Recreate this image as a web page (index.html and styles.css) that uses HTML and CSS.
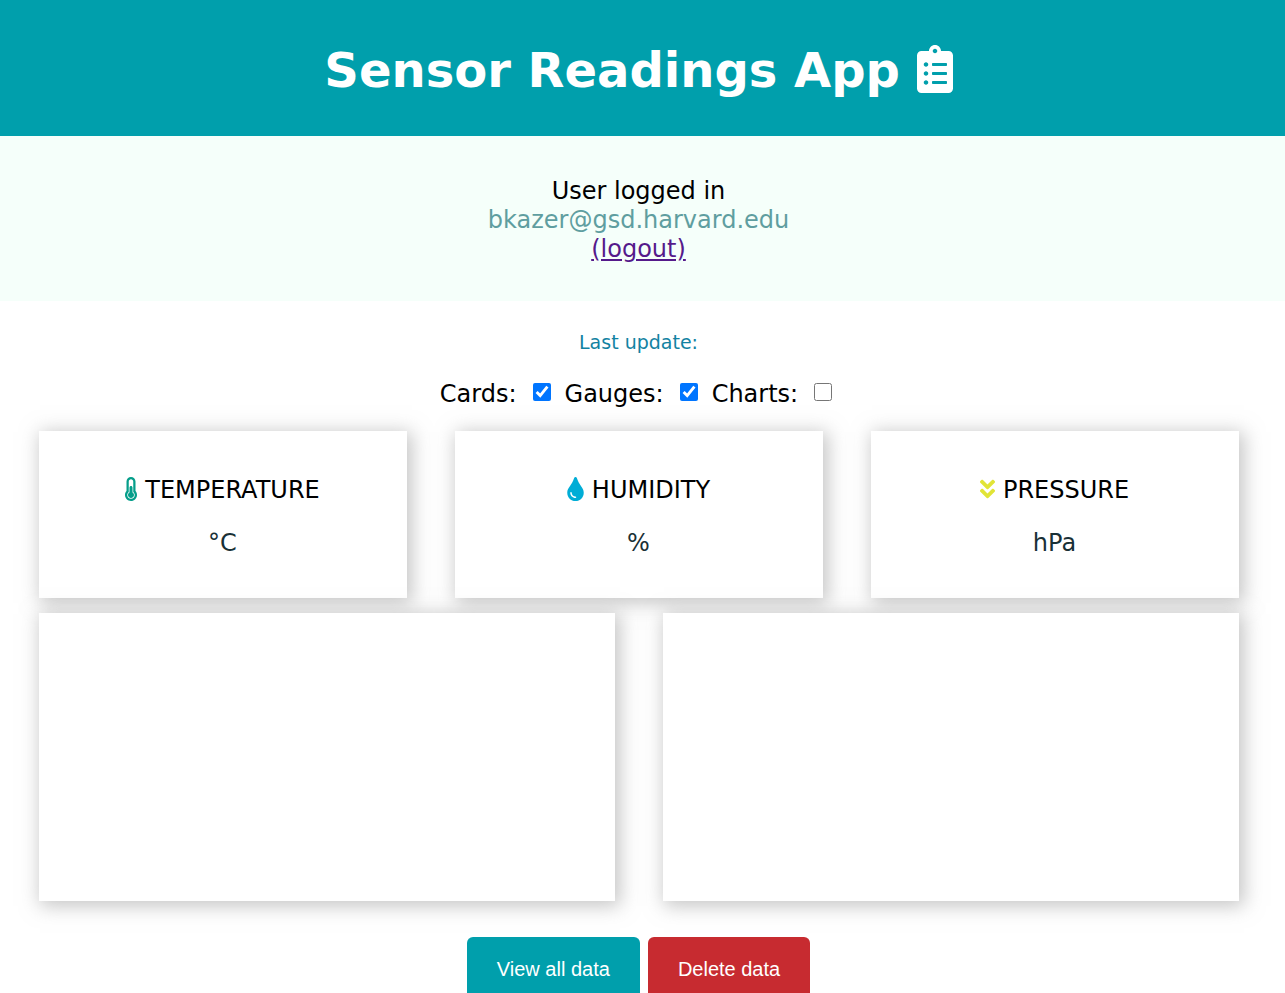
FILE: index.html
```html
<!DOCTYPE html>
<html lang="en">
<head>
<meta charset="utf-8">
<title>Sensor Readings App</title>
<meta name="viewport" content="width=device-width, initial-scale=1">
<link rel="stylesheet" href="styles.css">
</head>
<body>
<header class="topnav">
  <h1 class="title">Sensor Readings App
    <svg class="title-icon" viewBox="0 0 384 512" fill="currentColor" aria-hidden="true"><path d="M336 64h-80c0-35.3-28.7-64-64-64s-64 28.7-64 64H48C21.5 64 0 85.5 0 112v352c0 26.5 21.5 48 48 48h288c26.5 0 48-21.5 48-48V112c0-26.5-21.5-48-48-48zM96 424c-13.3 0-24-10.7-24-24s10.7-24 24-24 24 10.7 24 24-10.7 24-24 24zm0-96c-13.3 0-24-10.7-24-24s10.7-24 24-24 24 10.7 24 24-10.7 24-24 24zm0-96c-13.3 0-24-10.7-24-24s10.7-24 24-24 24 10.7 24 24-10.7 24-24 24zm96-192c13.3 0 24 10.7 24 24s-10.7 24-24 24-24-10.7-24-24 10.7-24 24-24zm128 368c0 4.400-3.600 8-8 8H168c-4.400 0-8-3.600-8-8v-16c0-4.400 3.600-8 8-8h144c4.400 0 8 3.600 8 8v16zm0-96c0 4.400-3.600 8-8 8H168c-4.400 0-8-3.600-8-8v-16c0-4.400 3.600-8 8-8h144c4.400 0 8 3.600 8 8v16zm0-96c0 4.400-3.600 8-8 8H168c-4.400 0-8-3.600-8-8v-16c0-4.400 3.600-8 8-8h144c4.400 0 8 3.600 8 8v16z"/></svg>
  </h1>
</header>
<section class="auth-bar">
  <p class="auth-text">User logged in</p>
  <p class="auth-email">bkazer@gsd.harvard.edu</p>
  <p class="auth-text"><a class="logout" href="#">(logout)</a></p>
</section>
<main class="content">
  <p class="update-time">Last update:</p>
  <form class="toggles">
    <label class="toggle">Cards: <input class="toggle-box" type="checkbox" checked></label>
    <label class="toggle">Gauges: <input class="toggle-box" type="checkbox" checked></label>
    <label class="toggle">Charts: <input class="toggle-box" type="checkbox"></label>
  </form>
  <section class="cards">
    <article class="card">
      <p class="card-title"><svg class="icon temperature" viewBox="0 0 256 512" width="12" height="24" fill="currentColor" aria-hidden="true"><path d="M192 384c0 35.346-28.654 64-64 64s-64-28.654-64-64c0-23.685 12.876-44.349 32-55.417V224c0-17.673 14.327-32 32-32s32 14.327 32 32v104.583c19.124 11.068 32 31.732 32 55.417zm32-84.653c19.912 22.563 32 52.194 32 84.653 0 70.696-57.303 128-128 128-.299 0-.609-.001-.909-.003C56.789 511.509-.357 453.636.002 383.333.166 351.135 12.225 321.755 32 299.347V96c0-53.019 42.981-96 96-96s96 42.981 96 96v203.347zM208 384c0-34.339-19.370-52.190-32-66.502V96c0-26.467-21.533-48-48-48S80 69.533 80 96v221.498c-12.732 14.428-31.825 32.100-31.999 66.080-.224 43.876 35.563 80.116 79.423 80.420L128 464c44.112 0 80-35.888 80-80z"/></svg> TEMPERATURE</p>
      <p class="reading">°C</p>
    </article>
    <article class="card">
      <p class="card-title"><svg class="icon humidity" viewBox="0 0 352 512" width="17" height="24" fill="currentColor" aria-hidden="true"><path d="M205.220 22.090c-7.940-28.780-49.440-30.120-58.440 0C100.010 179.850 0 222.720 0 333.910 0 432.350 78.720 512 176 512s176-79.650 176-178.090c0-111.750-99.790-153.340-146.780-311.820zM176 448c-61.750 0-112-50.250-112-112 0-8.840 7.160-16 16-16s16 7.160 16 16c0 44.110 35.890 80 80 80 8.840 0 16 7.160 16 16s-7.160 16-16 16z"/></svg> HUMIDITY</p>
      <p class="reading">%</p>
    </article>
    <article class="card">
      <p class="card-title"><svg class="icon pressure" viewBox="0 0 320 512" width="15" height="24" fill="currentColor" aria-hidden="true"><path d="M143 256.300L7 120.300c-9.400-9.400-9.400-24.600 0-33.900l22.600-22.600c9.400-9.400 24.600-9.400 33.900 0l96.400 96.400 96.400-96.400c9.400-9.400 24.600-9.400 33.900 0L313 86.300c9.400 9.400 9.400 24.600 0 33.900l-136 136c-9.400 9.500-24.600 9.500-34 .1zm34 192l136-136c9.400-9.400 9.400-24.600 0-33.900l-22.600-22.600c-9.400-9.400-24.600-9.400-33.900 0L160 352.100l-96.400-96.400c-9.400-9.400-24.600-9.400-33.900 0L7 278.300c-9.400 9.400-9.400 24.600 0 33.900l136 136c9.400 9.500 24.600 9.500 34 .1z"/></svg> PRESSURE</p>
      <p class="reading">hPa</p>
    </article>
  </section>
  <section class="gauges">
    <div class="card gauge"></div>
    <div class="card gauge"></div>
  </section>
  <div class="actions">
    <button class="button view" type="button">View all data</button>
    <button class="button delete" type="button">Delete data</button>
  </div>
</main>
</body>
</html>
```

FILE: styles.css
```css
* {
  box-sizing: border-box;
}

html {
  font-family: Verdana, "DejaVu Sans", sans-serif;
  font-size: 24px;
  line-height: 29px;
  text-align: center;
}

body {
  margin: 0;
}

p {
  margin: 0;
}

.topnav {
  padding: 41px 8px 37px 0;
  background: #009fac;
  color: #fff;
}

.title {
  margin: 0;
  font-size: 48px;
  line-height: 58px;
}

.title-icon {
  width: 36px;
  height: 48px;
  vertical-align: -6px;
}

.auth-bar {
  padding: 41px 8px 37px 0;
  background: mintcream;
}

.auth-email {
  color: cadetblue;
}

.logout {
  color: #551a8b;
}

.content {
  padding: 30px 8px 30px 0;
}

.update-time {
  color: #1282a2;
  font-size: 19px;
  line-height: 23px;
}

.toggles {
  display: flex;
  justify-content: center;
  gap: 14px;
  padding: 26px 5px 22px 0;
}

.toggle {
  display: flex;
  align-items: center;
  gap: 16px;
}

.toggle-box {
  width: 18px;
  height: 18px;
  margin: 0 0 5px;
}

.cards,
.gauges {
  display: grid;
  gap: 48px;
  max-width: 1200px;
  margin: 0 auto;
}

.cards {
  grid-template-columns: repeat(3, 1fr);
}

.gauges {
  grid-template-columns: repeat(2, 1fr);
  margin-top: 15px;
}

.card {
  background: #fff;
  box-shadow: 3px 3px 18px 2px rgba(140, 140, 140, 0.5);
}

.cards .card {
  padding: 45px 16px 40px;
}

.gauge {
  min-height: 288px;
}

.card-title {
  display: flex;
  justify-content: center;
  align-items: center;
  gap: 8px;
}

.icon {
  margin-bottom: 4px;
}

.reading {
  margin-top: 24px;
  color: #193036;
}

.temperature {
  color: #059e8a;
}

.humidity {
  color: #00add6;
}

.pressure {
  color: #e1e437;
}

.actions {
  display: flex;
  justify-content: center;
  gap: 8px;
  margin-top: 36px;
}

.button {
  padding: 20px 30px;
  border: 0;
  border-radius: 6px;
  color: #fff;
  font-family: Arial, "Liberation Sans", sans-serif;
  font-size: 20px;
  line-height: 24px;
}

.view {
  background: #009fac;
}

.delete {
  background: #c72b30;
}
```
